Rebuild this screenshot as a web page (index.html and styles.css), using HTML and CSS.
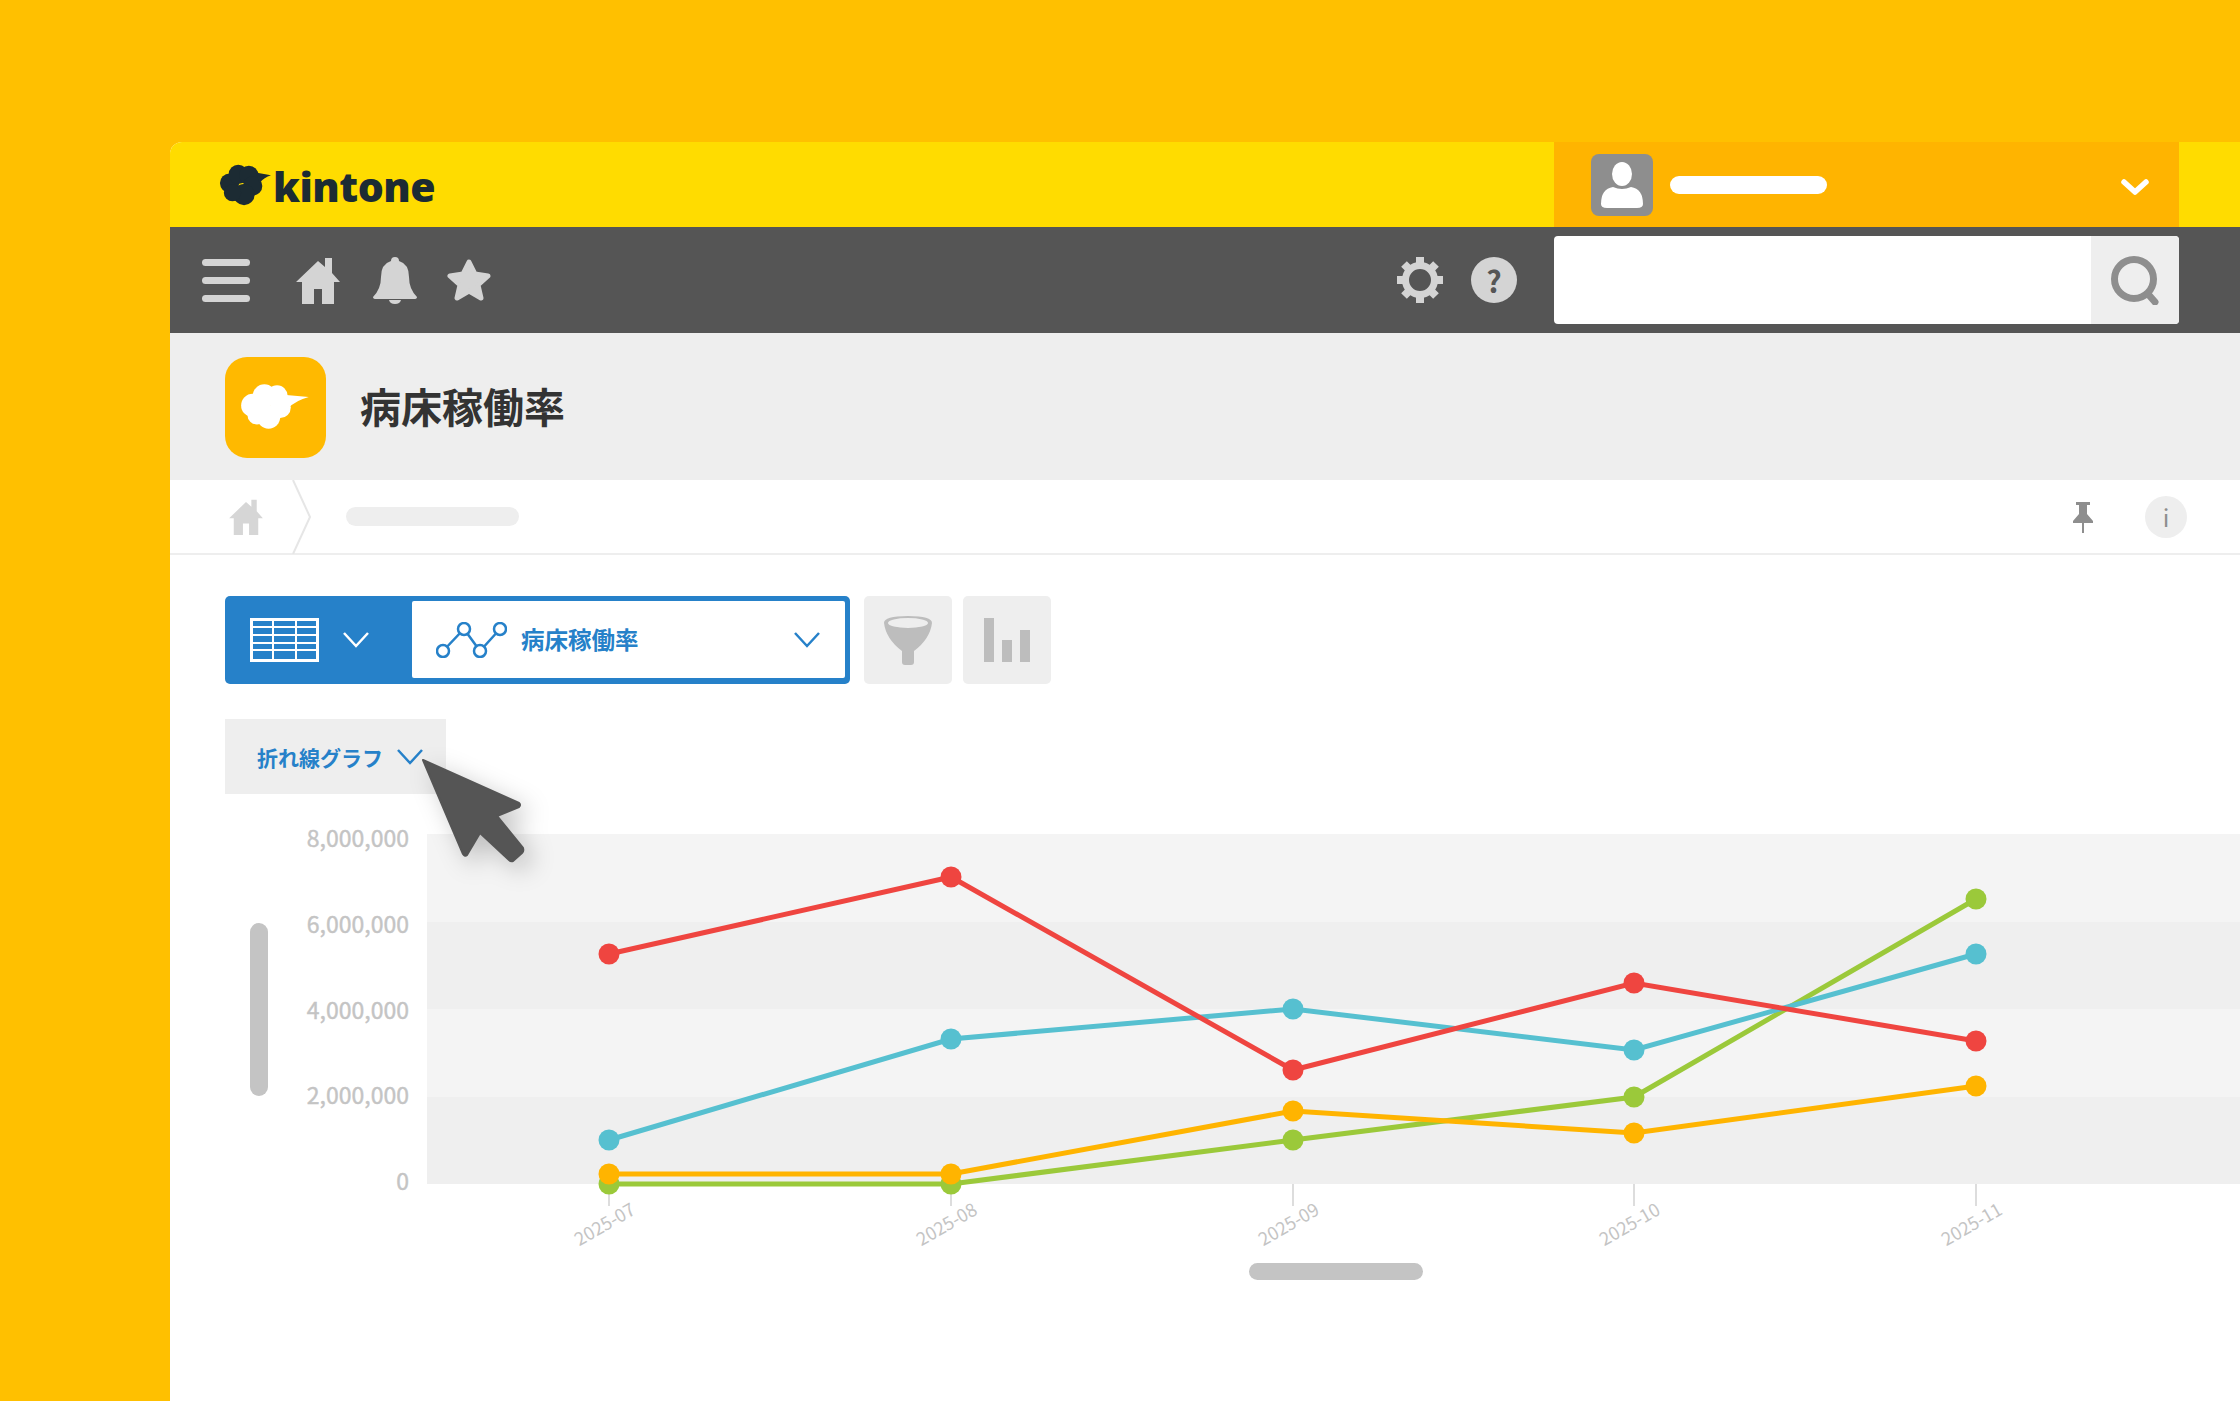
FILE: index.html
```html
<!DOCTYPE html>
<html lang="ja">
<head>
  <meta charset="UTF-8" />
  <title>kintone - 病床稼働率</title>
  <link rel="stylesheet" href="styles.css">
</head>
<body>
  <div class="window">
    <header class="topbar">
      <div class="logo">
        <svg class="logo-cloud" viewBox="0 0 54 42">
          <g fill="#1c2b33">
            <circle cx="11" cy="19" r="10"/><circle cx="20" cy="10" r="10"/><circle cx="31" cy="11" r="10"/>
            <circle cx="35" cy="22" r="10"/><circle cx="26" cy="31" r="11"/><circle cx="14" cy="29" r="9"/>
            <path d="M38 8 L54 11 Q47 13 42 19 Z"/>
          </g>
        </svg>
        <span class="logo-text">kintone</span>
      </div>
      <div class="user">
        <div class="avatar">
          <svg viewBox="0 0 62 62" width="62" height="62">
            <rect width="62" height="62" rx="8" fill="#8e8e8e"/>
            <ellipse cx="31" cy="20" rx="10" ry="12" fill="#fff"/>
            <path d="M10 50 Q10 35 22 33 Q31 37 40 33 Q52 35 52 50 Q52 54 46 54 L16 54 Q10 54 10 50 Z" fill="#fff"/>
          </svg>
        </div>
        <div class="user-name"></div>
        <svg class="user-caret" viewBox="0 0 30 20" width="30" height="20"><path d="M4 5 L15 15 L26 5" fill="none" stroke="#fff" stroke-width="5.5" stroke-linecap="round" stroke-linejoin="round"/></svg>
      </div>
    </header>

    <nav class="navbar">
      <div class="burger"><i></i><i></i><i></i></div>
      <svg class="nav-home" viewBox="0 0 44 47" width="44" height="47"><path d="M22 4 L29 10 L29 1 L36 1 L36 16 L44 25 L38 25 L38 47 L26 47 L26 32 L18 32 L18 47 L6 47 L6 25 L0 25 Z" fill="#d4d4d4"/></svg>
      <svg class="nav-bell" viewBox="0 0 44 47" width="44" height="47"><path d="M22 0 Q26 0 26 4 Q36 7 36 20 Q36 32 44 40 Q44 42 41 42 L3 42 Q0 42 0 40 Q8 32 8 20 Q8 7 18 4 Q18 0 22 0 Z M16 43 L28 43 Q27 47 22 47 Q17 47 16 43 Z" fill="#d4d4d4"/></svg>
      <svg class="nav-star" viewBox="0 0 44 44" width="44" height="44"><path d="M22 4 L28 16 L41 18 L31 27 L34 40 L22 33 L10 40 L13 27 L3 18 L16 16 Z" fill="#d4d4d4" stroke="#d4d4d4" stroke-width="5" stroke-linejoin="round"/></svg>
      <svg class="nav-gear" viewBox="0 0 46 46" width="46" height="46">
        <circle cx="23" cy="23" r="14.5" fill="none" stroke="#d4d4d4" stroke-width="7"/>
        <g stroke="#d4d4d4" stroke-width="8"><path d="M23 0V8M23 38V46M0 23H8M38 23H46M7 7L12 12M34 34L39 39M39 7L34 12M12 34L7 39"/></g>
      </svg>
      <div class="nav-help">?</div>
      <div class="search">
        <div class="search-input"></div>
        <div class="search-btn">
          <svg viewBox="0 0 50 50" width="50" height="50"><circle cx="24" cy="24" r="19.5" fill="none" stroke="#8e8e8e" stroke-width="7"/><path d="M38 39 L45 47" stroke="#8e8e8e" stroke-width="7" stroke-linecap="round"/></svg>
        </div>
      </div>
    </nav>

    <section class="app-head">
      <div class="app-icon">
        <svg viewBox="0 0 70 50" width="74" height="53">
          <g fill="#fff">
            <circle cx="13" cy="23" r="11"/><circle cx="24" cy="14" r="11"/><circle cx="36" cy="14" r="10"/>
            <circle cx="39" cy="25" r="10"/><circle cx="28" cy="34" r="11"/><circle cx="17" cy="32" r="9"/>
            <path d="M42 13 L66 15 Q54 18 46 26 Z"/>
          </g>
        </svg>
      </div>
      <h1 class="app-title">病床稼働率</h1>
    </section>

    <div class="breadcrumb">
      <svg class="crumb-home" viewBox="0 0 44 47" width="36" height="36"><path d="M22 4 L29 10 L29 1 L36 1 L36 16 L44 25 L38 25 L38 47 L26 47 L26 32 L18 32 L18 47 L6 47 L6 25 L0 25 Z" fill="#d6d6d6"/></svg>
      <svg class="crumb-sep" viewBox="0 0 20 74" width="20" height="74"><path d="M1 0 L18 37 L1 74" fill="none" stroke="#e6e6e6" stroke-width="2"/></svg>
      <div class="crumb-name"></div>
      <svg class="crumb-pin" viewBox="0 0 24 32" width="24" height="32"><path d="M5 1H19V4H16V13L22 20V22H2V20L8 13V4H5Z" fill="#8e8e8e"/><path d="M12 22V32" stroke="#8e8e8e" stroke-width="2"/></svg>
      <div class="crumb-info">i</div>
    </div>

    <main class="content">
      <div class="toolbar">
        <div class="view-picker">
          <div class="view-type">
            <svg viewBox="0 0 69 44" width="69" height="44">
              <rect x="1.5" y="1.5" width="66" height="41" fill="#2681c9" stroke="#fff" stroke-width="3"/>
              <path d="M2 9H67M2 17H67M2 25H67M2 32H67M23 2V43M46 2V43" stroke="#fff" stroke-width="2"/>
            </svg>
            <svg class="chev" viewBox="0 0 26 16" width="26" height="16"><path d="M1 1 L13 14 L25 1" fill="none" stroke="#fff" stroke-width="2.5"/></svg>
          </div>
          <div class="view-select">
            <svg viewBox="0 0 71 36" width="71" height="36">
              <polyline points="7,29 28,7 44,29 64,7" fill="none" stroke="#2681c9" stroke-width="2.5"/>
              <g fill="#fff" stroke="#2681c9" stroke-width="2.5">
                <circle cx="7" cy="29" r="6"/><circle cx="28" cy="7" r="6"/><circle cx="44" cy="29" r="6"/><circle cx="64" cy="7" r="6"/>
              </g>
            </svg>
            <span class="view-name">病床稼働率</span>
            <svg class="chev" viewBox="0 0 26 16" width="26" height="16"><path d="M1 1 L13 14 L25 1" fill="none" stroke="#2681c9" stroke-width="2.5"/></svg>
          </div>
        </div>
        <div class="tool-btn tool-filter">
          <svg viewBox="0 0 50 50" width="50" height="50">
            <path d="M1 8 Q1 1 25 1 Q49 1 49 8 Q47 24 31 36 V47 Q31 50 28 50 H22 Q19 50 19 47 V36 Q3 24 1 8 Z" fill="#bdbdbd"/>
            <ellipse cx="25" cy="8" rx="20" ry="5" fill="#eee"/>
          </svg>
        </div>
        <div class="tool-btn tool-graph">
          <svg viewBox="0 0 46 44" width="46" height="44"><path d="M0 0H10V44H0ZM18 22H28V44H18ZM36 12H46V44H36Z" fill="#bdbdbd"/></svg>
        </div>
      </div>

      <div class="chart-type">
        <span>折れ線グラフ</span>
        <svg viewBox="0 0 26 16" width="26" height="16"><path d="M1 1 L13 14 L25 1" fill="none" stroke="#2681c9" stroke-width="2.5"/></svg>
      </div>

      <div class="chart">
        <div class="v-scroll"></div>
        <div class="y-axis">
          <span>8,000,000</span><span>6,000,000</span><span>4,000,000</span><span>2,000,000</span><span>0</span>
        </div>
        <svg class="plot" viewBox="0 0 1813 429" width="1813" height="429">
          <rect y="0" width="1813" height="88" fill="#f4f4f4"/>
          <rect y="88" width="1813" height="87" fill="#efefef"/>
          <rect y="175" width="1813" height="88" fill="#f4f4f4"/>
          <rect y="263" width="1813" height="87" fill="#efefef"/>
          <path d="M182 350V372M524 350V372M866 350V372M1207 350V372M1549 350V372" stroke="#d2d2d2" stroke-width="1.5"/>

          <g class="series" stroke="#9bc93a" fill="#9bc93a">
            <polyline fill="none" points="182,350 524,350 866,306 1207,263 1549,65"/>
            <circle cx="182" cy="350" r="10.5"/><circle cx="524" cy="350" r="10.5"/><circle cx="866" cy="306" r="10.5"/><circle cx="1207" cy="263" r="10.5"/><circle cx="1549" cy="65" r="10.5"/>
          </g>
          <g class="series" stroke="#ffb400" fill="#ffb400">
            <polyline fill="none" points="182,340 524,340 866,277 1207,299 1549,252"/>
            <circle cx="182" cy="340" r="10.5"/><circle cx="524" cy="340" r="10.5"/><circle cx="866" cy="277" r="10.5"/><circle cx="1207" cy="299" r="10.5"/><circle cx="1549" cy="252" r="10.5"/>
          </g>
          <g class="series" stroke="#56c0d0" fill="#56c0d0">
            <polyline fill="none" points="182,306 524,205 866,175 1207,216 1549,120"/>
            <circle cx="182" cy="306" r="10.5"/><circle cx="524" cy="205" r="10.5"/><circle cx="866" cy="175" r="10.5"/><circle cx="1207" cy="216" r="10.5"/><circle cx="1549" cy="120" r="10.5"/>
          </g>
          <g class="series" stroke="#ef4540" fill="#ef4540">
            <polyline fill="none" points="182,120 524,43 866,236 1207,149 1549,207"/>
            <circle cx="182" cy="120" r="10.5"/><circle cx="524" cy="43" r="10.5"/><circle cx="866" cy="236" r="10.5"/><circle cx="1207" cy="149" r="10.5"/><circle cx="1549" cy="207" r="10.5"/>
          </g>

          <g class="x-labels" text-anchor="middle">
            <text transform="translate(181 396) rotate(-30)">2025-07</text>
            <text transform="translate(523 396) rotate(-30)">2025-08</text>
            <text transform="translate(865 396) rotate(-30)">2025-09</text>
            <text transform="translate(1206 396) rotate(-30)">2025-10</text>
            <text transform="translate(1548 396) rotate(-30)">2025-11</text>
          </g>
        </svg>
      </div>

      <div class="h-scroll"></div>
    </main>

    <svg class="cursor" viewBox="0 0 130 130" width="130" height="130">
      <path d="M8 6 L104 49 Q106 51 104 53 L82 62 L108 94 Q109 97 107 99 L98 107 Q96 108 94 106 L65 79 L52 101 Q50 103 48 100 Z" fill="#555" stroke="#555" stroke-width="2" stroke-linejoin="round"/>
    </svg>
  </div>
</body>
</html>
```

FILE: styles.css
```css
html, body {
  height: 100%;
}
body {
  margin: 0;
  background: #ffc000;
  font-family: "Noto Sans CJK JP", "Noto Sans", sans-serif;
  overflow: hidden;
  padding: 142px 0 0 170px;
  box-sizing: border-box;
}
.window {
  position: relative;
  background: white;
  height: 1259px;
  border-top-left-radius: 12px;
  overflow: hidden;
}

/* top bar */
.topbar {
  height: 85px;
  background: #ffdc00;
  display: flex;
  justify-content: space-between;
  padding-right: 61px;
}
.logo {
  display: flex;
  align-items: center;
  padding-left: 49px;
}
.logo-cloud {
  width: 52px;
  height: 42px;
}
.logo-text {
  font-family: "Open Sans", sans-serif;
  font-weight: 800;
  font-size: 41px;
  letter-spacing: -0.5px;
  color: #1c2b33;
  margin: 2px 0 0 2px;
}
.user {
  width: 625px;
  background: #ffb400;
  display: flex;
  align-items: center;
  padding: 0 29px 0 37px;
  box-sizing: border-box;
}
.avatar {
  height: 62px;
}
.user-name {
  width: 157px;
  height: 18px;
  background: white;
  border-radius: 9px;
  margin-left: 17px;
}
.user-caret {
  margin-left: auto;
  margin-top: 4px;
}

/* dark nav */
.navbar {
  height: 106px;
  background: #555;
  display: flex;
  align-items: center;
  padding-right: 61px;
}
.burger {
  width: 48px;
  margin-left: 32px;
  display: flex;
  flex-direction: column;
  gap: 11px;
}
.burger i {
  display: block;
  height: 7px;
  background: #d4d4d4;
  border-radius: 4px;
}
.nav-home {
  margin-left: 46px;
}
.nav-bell {
  margin-left: 33px;
}
.nav-star {
  margin-left: 30px;
}
.nav-gear {
  margin-left: auto;
}
.nav-help {
  width: 46px;
  height: 46px;
  border-radius: 50%;
  background: #d4d4d4;
  color: #555;
  font-weight: 700;
  font-size: 30px;
  line-height: 46px;
  text-align: center;
  margin-left: 28px;
  margin-right: 37px;
}
.search {
  width: 625px;
  height: 88px;
  background: white;
  border-radius: 4px;
  display: flex;
  overflow: hidden;
}
.search-input {
  flex: 1;
}
.search-btn {
  width: 88px;
  background: #eee;
  display: flex;
  align-items: center;
  justify-content: center;
}

/* app title */
.app-head {
  height: 145px;
  padding-top: 2px;
  background: #eee;
  display: flex;
  align-items: center;
  padding-left: 55px;
}
.app-icon {
  width: 101px;
  height: 101px;
  background: #ffb900;
  border-radius: 22px;
  display: flex;
  align-items: center;
  justify-content: center;
}
.app-title {
  margin: 0 0 6px 34px;
  font-size: 41px;
  font-weight: 700;
  color: #333;
}

/* breadcrumb */
.breadcrumb {
  height: 73px;
  border-bottom: 2px solid #eee;
  display: flex;
  align-items: center;
  padding-right: 53px;
}
.crumb-home {
  margin-left: 58px;
}
.crumb-sep {
  margin-left: 28px;
}
.crumb-name {
  width: 173px;
  height: 19px;
  background: #eee;
  border-radius: 10px;
  margin-left: 34px;
}
.crumb-pin {
  margin-left: auto;
}
.crumb-info {
  width: 42px;
  height: 42px;
  border-radius: 50%;
  background: #eee;
  color: #8e8e8e;
  font-size: 24px;
  line-height: 42px;
  text-align: center;
  margin-left: 50px;
}

/* main */
.content {
  padding: 41px 0 0 55px;
}
.toolbar {
  display: flex;
  gap: 12px;
}
.view-picker {
  width: 625px;
  height: 88px;
  background: #2681c9;
  border-radius: 5px;
  display: flex;
  box-sizing: border-box;
  padding: 5px 5px 6px 0;
  margin-right: 2px;
}
.view-type {
  width: 187px;
  display: flex;
  align-items: center;
  padding-left: 25px;
  gap: 24px;
  box-sizing: border-box;
}
.view-select {
  flex: 1;
  background: white;
  border-radius: 2px;
  display: flex;
  align-items: center;
  padding: 0 25px 0 24px;
}
.view-name {
  color: #2681c9;
  font-size: 23.5px;
  font-weight: 700;
  margin: -2px 0 0 14px;
}
.view-select .chev {
  margin-left: auto;
}
.tool-btn {
  width: 88px;
  height: 88px;
  background: #eee;
  border-radius: 5px;
  display: flex;
  align-items: center;
  justify-content: center;
}
.tool-graph {
  margin-left: -1px;
}
.chart-type {
  width: 221px;
  height: 75px;
  margin-top: 35px;
  background: #eee;
  display: flex;
  align-items: center;
  padding-left: 32px;
  gap: 14px;
  box-sizing: border-box;
  color: #2681c9;
  font-size: 21px;
  font-weight: 700;
}
.chart {
  display: flex;
  margin-top: 40px;
}
.v-scroll {
  width: 18px;
  height: 173px;
  background: #c4c4c4;
  border-radius: 9px;
  margin: 89px 0 0 25px;
}
.y-axis {
  width: 141px;
  height: 363px;
  display: flex;
  flex-direction: column;
  justify-content: space-between;
  align-items: flex-end;
  color: #c4c4c4;
  font-size: 23px;
  line-height: 20px;
  -webkit-text-stroke: 0.4px #c4c4c4;
  margin-top: -7px;
  margin-right: 18px;
}
.plot {
  display: block;
  flex: none;
}
.series {
  stroke-width: 5;
}
.series circle {
  stroke: none;
}
.x-labels {
  fill: #c4c4c4;
  font-size: 18px;
}
.h-scroll {
  width: 174px;
  height: 17px;
  background: #c4c4c4;
  border-radius: 9px;
  margin-left: 1024px;
}
.cursor {
  position: absolute;
  left: 245px;
  top: 612px;
  filter: drop-shadow(8px 8px 12px rgba(0,0,0,0.22));
}
```
